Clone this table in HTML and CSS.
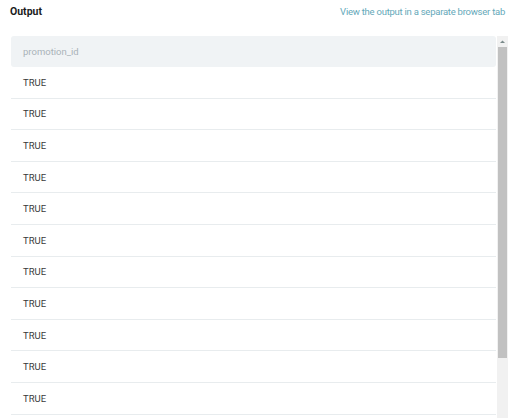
FILE: index.html
```html
<!DOCTYPE html>
<html>
<head>
<meta charset="utf-8">
<link rel="stylesheet" href="styles.css">
</head>
<body>
<div class="page">
  <div class="topbar">
    <span class="title">Output</span>
    <a class="link" href="#">View the output in a separate browser tab</a>
  </div>
  <div class="frame">
    <div class="table">
      <div class="head">promotion_id</div>
      <div class="row">TRUE</div>
      <div class="row">TRUE</div>
      <div class="row">TRUE</div>
      <div class="row">TRUE</div>
      <div class="row">TRUE</div>
      <div class="row">TRUE</div>
      <div class="row">TRUE</div>
      <div class="row">TRUE</div>
      <div class="row">TRUE</div>
      <div class="row">TRUE</div>
      <div class="row">TRUE</div>
    </div>
    <div class="scrollbar">
      <div class="arrow">
        <svg width="11" height="11" viewBox="0 0 11 11"><path d="M3 7 L5.5 4.5 L8 7 Z" fill="#7a8a8a"/></svg>
      </div>
      <div class="thumb"></div>
    </div>
  </div>
</div>
</body>
</html>
```
FILE: styles.css
```css
html, body {
  margin: 0;
  padding: 0;
  background: #fff;
  overflow: hidden;
}
.page {
  width: 512px;
  height: 418px;
  font-family: Roboto, "Liberation Sans", Arial, sans-serif;
  display: flex;
  flex-direction: column;
}
.topbar {
  display: flex;
  justify-content: space-between;
  align-items: flex-start;
  padding: 4px 7px 0 10px;
  height: 32px;
  box-sizing: border-box;
  margin-bottom: 4px;
}
.title {
  font-weight: bold;
  font-size: 10.5px;
  color: #1b1b1b;
  line-height: 15px;
}
.link {
  font-size: 9.5px;
  letter-spacing: -0.25px;
  color: #64a8b9;
  text-decoration: none;
  line-height: 15px;
}
.frame {
  margin-left: 11px;
  width: 497px;
  height: 382px;
  overflow: hidden;
  display: flex;
}
.table {
  flex: 1;
  display: flex;
  flex-direction: column;
  margin-right: 1px;
}
.head {
  height: 31px;
  flex: none;
  background: #f0f3f5;
  border-radius: 3px;
  font-size: 9.5px;
  color: #a9b2b8;
  padding-left: 12px;
  display: flex;
  align-items: center;
}
.row {
  height: 30.6px;
  flex: none;
  border-bottom: 1px solid #e8ecee;
  font-size: 9.5px;
  color: #3a3a3a;
  padding-left: 12px;
  display: flex;
  align-items: center;
}
.scrollbar {
  width: 11px;
  flex: none;
  background: #f1f1f1;
  display: flex;
  flex-direction: column;
}
.arrow {
  height: 11px;
  display: flex;
}
.thumb {
  height: 311px;
  margin: 0 1px;
  background: #c1c1c1;
}
```
